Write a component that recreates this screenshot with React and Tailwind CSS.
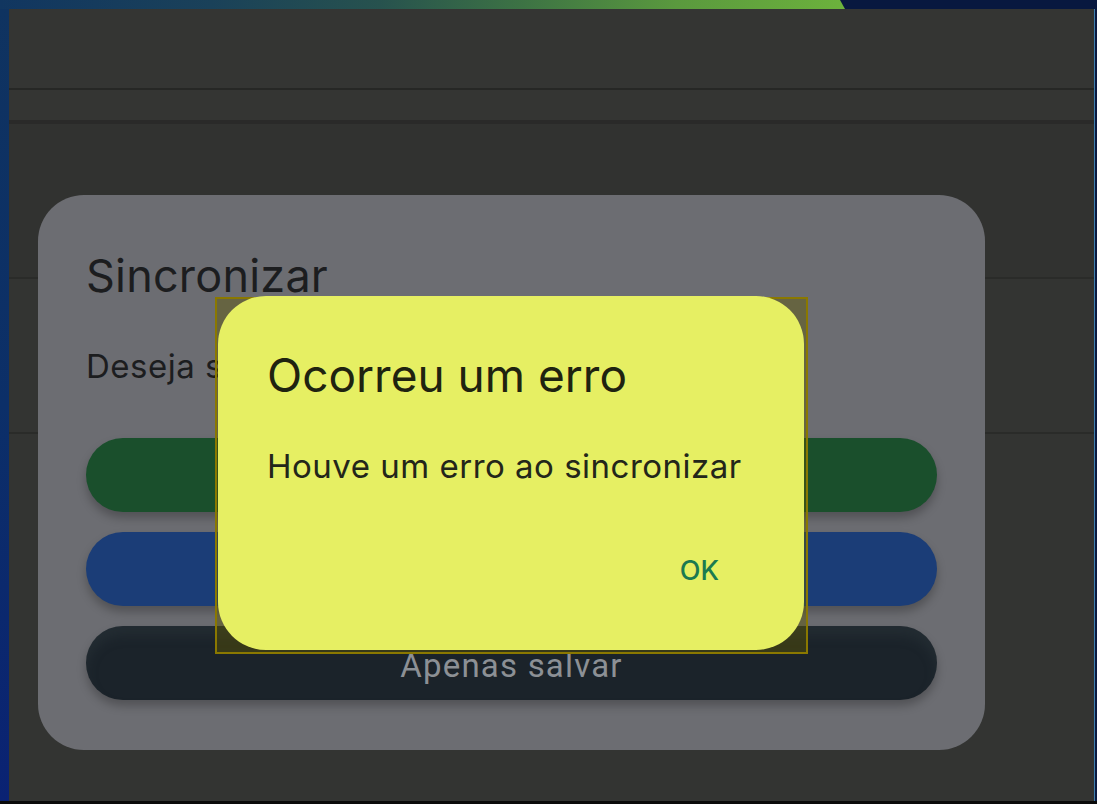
import React from "react";

export default function App() {
  return (
    <div
      className="relative w-[1097px] h-[804px] overflow-hidden bg-[#0a0a0a] flex flex-col"
      style={{ fontFamily: "Inter, 'Noto Sans', sans-serif" }}
    >
      {/* top frame strip */}
      <div className="h-[9px] flex shrink-0 bg-[#08183f]">
        <div className="w-[845px] h-full bg-[linear-gradient(90deg,#113660_0%,#1a4159_25%,#27524e_45%,#3d7344_62%,#5a993e_80%,#6cb23c_100%)] [clip-path:polygon(0_0,840px_0,845px_100%,0_100%)]" />
        <div className="flex-1" />
      </div>

      <div className="flex flex-1 min-h-0">
        {/* left frame strip */}
        <div className="w-[9px] bg-[linear-gradient(180deg,#0f3360_0%,#0c2f68_50%,#0a2273_100%)]" />

        {/* main app background */}
        <div className="flex-1 flex flex-col bg-[#333432]">
          <div className="h-[79px] bg-[#343533]" />
          <div className="h-[2px] bg-[#262725]" />
          <div className="h-[30px] bg-[#343533]" />
          <div className="h-[4px] bg-[#2a2a29]" />
          <div className="h-[153px] bg-[#313230]" />
          <div className="h-[2px] bg-[#2a2b29]" />
          <div className="h-[153px] bg-[#333432]" />
          <div className="h-[2px] bg-[#2a2b29]" />
          <div className="flex-1 bg-[#333432]" />
        </div>

        {/* right frame strip */}
        <div className="w-[3px] bg-[#0a1a40] border-l border-[#3f7fae]" />
      </div>

      {/* bottom frame strip */}
      <div className="h-[3px] shrink-0 bg-[#0a0a0a]" />

      {/* Sincronizar dialog */}
      <div className="absolute left-[38px] top-[195px] w-[947px] h-[555px] rounded-[46px] bg-[#6c6d72] flex flex-col px-[48px]">
        <div className="mt-[58px] text-[45px] leading-none text-[#1c1d1f] tracking-[0.2px]">
          Sincronizar
        </div>
        <div className="mt-[52px] text-[33px] leading-none text-[#1c1d1f] whitespace-nowrap tracking-[0.5px]">
          Deseja sincronizar agora?
        </div>
        <div className="mt-[55px] flex flex-col gap-[20px]">
          <div className="h-[74px] rounded-full bg-[#1a4f2c] shadow-[0_6px_10px_rgba(0,0,0,0.25)]" />
          <div className="h-[74px] rounded-full bg-[#1b3d77] shadow-[0_6px_10px_rgba(0,0,0,0.25)]" />
          <div className="h-[74px] rounded-full bg-[#1b232a] shadow-[0_6px_10px_rgba(0,0,0,0.25),inset_0_10px_12px_rgba(60,70,75,0.25)] flex items-center justify-center">
            <span
              className="text-[33px] leading-none text-[#8c9095] mt-[4px] tracking-[1.2px]"
              style={{ fontFamily: "Roboto, 'Liberation Sans', sans-serif" }}
            >
              Apenas salvar
            </span>
          </div>
        </div>
      </div>

      {/* error dialog backdrop */}
      <div className="absolute left-[215px] top-[297px] w-[593px] h-[357px] bg-[rgba(95,88,0,0.42)] border-2 border-[#8a7800]" />

      {/* error dialog */}
      <div className="absolute left-[218px] top-[296px] w-[586px] h-[354px] rounded-[48px] bg-[#e6ef63] flex flex-col pl-[49px] pr-[85px]">
        <div className="mt-[56px] text-[46px] leading-none text-[#1f2310] whitespace-nowrap">
          Ocorreu um erro
        </div>
        <div className="mt-[52px] text-[33px] leading-none text-[#23261a] whitespace-nowrap tracking-[0.5px]">
          Houve um erro ao sincronizar
        </div>
        <div className="mt-[74px] flex justify-end">
          <span className="text-[27px] leading-none font-medium text-[#1b7a50]">OK</span>
        </div>
      </div>
    </div>
  );
}
